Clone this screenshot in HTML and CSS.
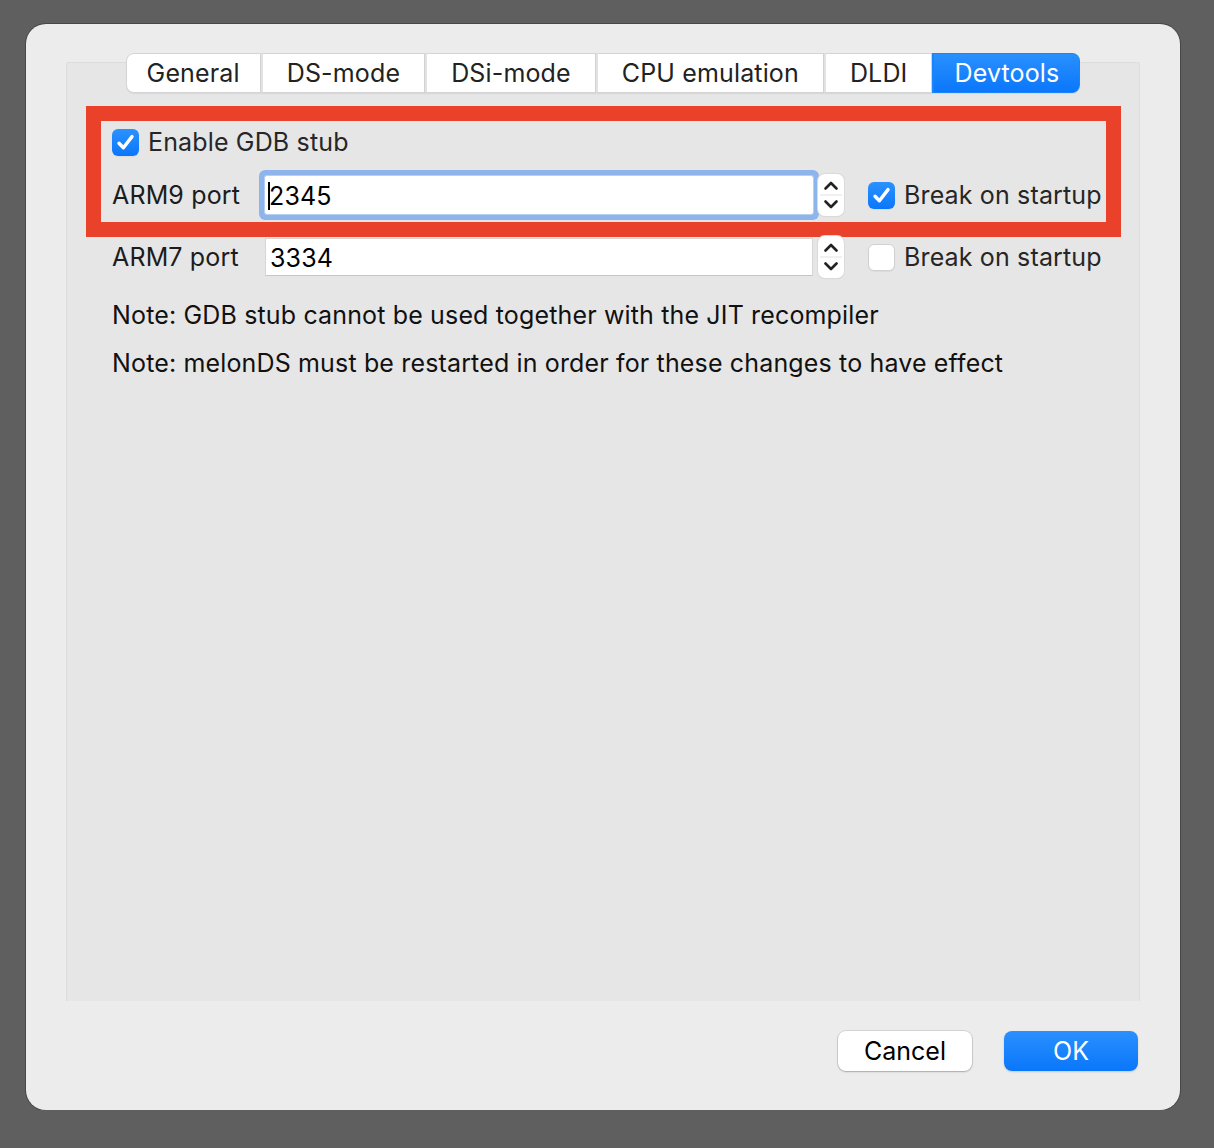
FILE: index.html
```html
<!DOCTYPE html>
<html>
<head>
<title>Emu settings</title>
<link rel="stylesheet" href="styles.css">
</head>
<body>

<div class="window">

  <!-- TABS -->
  <div class="tabs">
    <div class="tab">General</div>
    <div class="tab">DS-mode</div>
    <div class="tab">DSi-mode</div>
    <div class="tab">CPU emulation</div>
    <div class="tab">DLDI</div>
    <div class="tab active">Devtools</div>
  </div>

  <!-- DEVTOOLS PANE -->
  <div class="pane">

    <div class="highlight">
      <div class="row row-top">
        <span class="check on"><svg viewBox="0 0 27 27"><path d="M7 14.2l4.4 4.6 8.6-11.2" fill="none" stroke="#fff" stroke-width="3.4" stroke-linecap="round" stroke-linejoin="round"/></svg></span>
        <span class="check-label">Enable GDB stub</span>
      </div>

      <div class="row">
        <span class="label">ARM9 port</span>
        <div class="field focus"><span class="caret"></span>2345</div>
        <div class="spin">
          <svg viewBox="0 0 26 42"><path d="M7.5 14.5l5.5-5.5 5.5 5.5M7.5 27.5l5.5 5.5 5.5-5.5" fill="none" stroke="#222" stroke-width="2.6" stroke-linecap="round" stroke-linejoin="round"/><path d="M2 21h22" stroke="#e2e2e2" stroke-width="1"/></svg>
        </div>
        <span class="check on"><svg viewBox="0 0 27 27"><path d="M7 14.2l4.4 4.6 8.6-11.2" fill="none" stroke="#fff" stroke-width="3.4" stroke-linecap="round" stroke-linejoin="round"/></svg></span>
        <span class="check-label">Break on startup</span>
      </div>
    </div>

    <div class="row row-arm7">
      <span class="label">ARM7 port</span>
      <div class="field">3334</div>
      <div class="spin">
        <svg viewBox="0 0 26 42"><path d="M7.5 14.5l5.5-5.5 5.5 5.5M7.5 27.5l5.5 5.5 5.5-5.5" fill="none" stroke="#222" stroke-width="2.6" stroke-linecap="round" stroke-linejoin="round"/><path d="M2 21h22" stroke="#e2e2e2" stroke-width="1"/></svg>
      </div>
      <span class="check"></span>
      <span class="check-label">Break on startup</span>
    </div>

    <div class="notes">
      <p>Note: GDB stub cannot be used together with the JIT recompiler</p>
      <p>Note: melonDS must be restarted in order for these changes to have effect</p>
    </div>

  </div>

  <!-- BUTTONS -->
  <div class="buttons">
    <button class="btn">Cancel</button>
    <button class="btn primary">OK</button>
  </div>

</div>

</body>
</html>
```

FILE: styles.css
```css
body {margin:0; background:#5f5f5f; font-family:Inter, "Liberation Sans", sans-serif; font-size:25px; letter-spacing:.15px; color:#262626;}

.window {
  margin:24px 0 0 26px; width:1154px; height:1086px;
  background:#ececec; border-radius:20px;
  box-shadow:0 0 0 1px rgba(0,0,0,.25);
  overflow:hidden;
}

.tabs {
  display:flex; justify-content:center;
  margin-top:29px; position:relative; z-index:1;
}
.tab {
  height:38px; line-height:38px; padding:0 24px;
  background:#fff; border:1px solid #d4d4d4; border-left:none;
  box-shadow:0 1px 1px rgba(0,0,0,.06);
  color:#222;
}
.tab:first-child {border-left:1px solid #d4d4d4; border-radius:8px 0 0 8px; padding:0 20px;}
.tab + .tab {border-left:2px solid #e2e2e2;}
.tab.active {
  background:linear-gradient(#2a90fe,#0a77fb); color:#fff;
  border-color:#1a84fc; border-radius:0 8px 8px 0;
  padding:0 20px;
}

.pane {
  margin:-31px 40px 0; height:939px;
  background:#e6e6e6; border:1px solid #dcdcdc; border-bottom:none;
  border-radius:3px 3px 0 0;
  padding:43px 0 0 19px;
  box-sizing:border-box;
}

.highlight {
  width:1035px; box-sizing:border-box;
  border:15px solid #e9412a;
  padding:3px 0 8px 11px;
}

.row {display:flex; align-items:center; height:38px;}
.row-top {height:36px; margin-bottom:16px;}
.row-arm7 {margin:1px 0 0 26px;}

.label {width:153px; color:#1c1c1c;}

.field {
  width:548px; height:38px; line-height:38px;
  background:#fff; color:#000; box-sizing:border-box;
  padding-left:4px;
  border:1px solid #d6d6d6; border-bottom-color:#c6c6c6;
}
.field.focus {
  padding-left:2px;
  border-color:#fff;
  box-shadow:0 0 0 1px #b5cff2, 0 0 0 6px #8db5ec;
  border-radius:2px;
}
.caret {display:inline-block; width:2px; height:28px; background:#000; vertical-align:middle; margin:-4px -1px 0 0;}

.spin {
  width:26px; height:42px; margin-left:5px;
  background:#fff; border-radius:7px;
  box-shadow:0 0 0 1px #dadada, 0 1px 1px rgba(0,0,0,.08);
}
.spin svg {display:block; width:26px; height:42px;}

.check {
  width:27px; height:27px; box-sizing:border-box;
  border-radius:6px; background:#fff; border:1px solid #d0d0d0;
  box-shadow:0 1px 1px rgba(0,0,0,.05);
  margin:0 9px 0 0;
}
.row .spin + .check {margin-left:24px;}
.check.on {background:linear-gradient(#2b92fe,#0a77fb); border:none;}
.check svg {display:block; width:27px; height:27px;}
.check-label {color:#262626;}

.notes {margin-top:15px; padding-left:26px;}
.notes p {margin:0; line-height:48px; color:#111;}

.buttons {display:flex; justify-content:flex-end; gap:32px; margin:30px 42px 0 0;}
.btn {
  width:134px; height:40px; border:none; border-radius:8px;
  font-family:inherit; font-size:25px; color:#000;
  background:#fff; box-shadow:0 0 0 1px rgba(0,0,0,.1), 0 1px 2px rgba(0,0,0,.2);
}
.btn.primary {background:linear-gradient(#2a90fe,#0a77fb); color:#fff; box-shadow:0 1px 2px rgba(0,0,0,.15);}
```
